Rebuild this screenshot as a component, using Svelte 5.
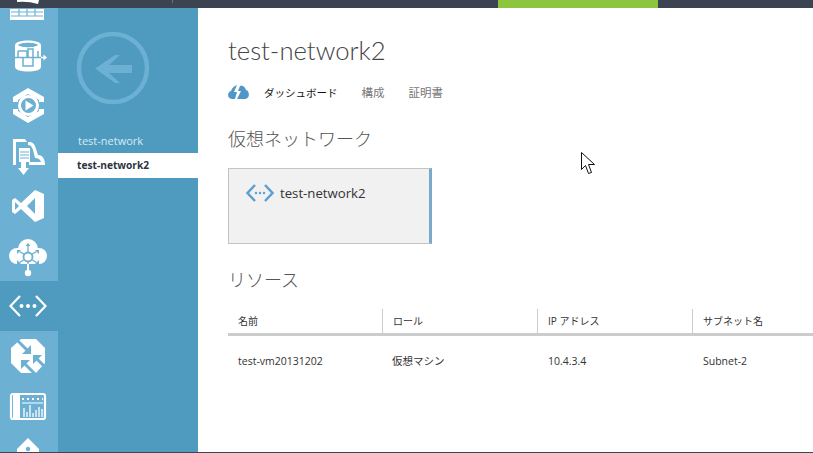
<script lang="ts">
	const columns = ['名前', 'ロール', 'IP アドレス', 'サブネット名'];
	const row = ['test-vm20131202', '仮想マシン', '10.4.3.4', 'Subnet-2'];
	const tabs = ['構成', '証明書'];
</script>

<div class="portal">
	<div class="topbar">
		<svg class="logo" width="24" height="4" viewBox="0 0 24 4"><path d="M0 0h22l-1 4q-10-3-21-2z" fill="#fff" /></svg>
		<span class="tick"></span>
		<span class="progress"></span>
	</div>

	<div class="body">
		<nav class="rail">
			<!-- grid -->
			<a class="item" href="#sql">
				<svg width="58" height="50" viewBox="0 0 58 50">
					<path d="M10 28h34v11H10z" fill="#fff" />
					<path d="M19 27v8M27 27v8M35 27v8M11 31h32M11 35h32" stroke="#6cb0d3" stroke-width="1.200" fill="none" />
				</svg>
			</a>
			<!-- db sync -->
			<a class="item" href="#db">
				<svg width="58" height="50" viewBox="0 0 58 50">
					<path d="M15 14c0-6 26-6 26 0v22c0 6-26 6-26 0z" fill="#fff" />
					<path d="M18 14c3-3 17-3 20 0c-3 3-17 3-20 0z" fill="#6cb0d3" />
					<path d="M18 20h9v6M18 20v7M23 27v8h10v-8M33 27v-9h-5v9M38 20v7" fill="none" stroke="#6cb0d3" stroke-width="1.500" />
					<path d="M15 26.500h26" stroke="#6cb0d3" stroke-width="1.500" />
					<path d="M41 26.500h4" stroke="#fff" stroke-width="1.600" />
					<path d="M43.500 23.500l3.500 3-3.500 3z" fill="#fff" />
				</svg>
			</a>
			<!-- media -->
			<a class="item" href="#media">
				<svg width="58" height="50" viewBox="0 0 58 50">
					<path d="M13 21v-5l15-9 16 9v5h-5v-2l-11-6-10 6v2zM13 28v5l15 9 16-9v-5h-5v2l-11 6-10-6v-2z" fill="#fff" />
					<circle cx="28.500" cy="24.500" r="9" fill="none" stroke="#fff" stroke-width="3" />
					<path d="M25.500 19.500l8 5-8 5z" fill="#fff" />
				</svg>
			</a>
			<!-- service bus download -->
			<a class="item" href="#bus">
				<svg width="58" height="50" viewBox="0 0 58 50">
					<path d="M13 8h12l2 3h3c3 0 5 3 6 7l2 6c4 0 7 3 7 10H29v-3h12c-1-3-3-4-6-4l-2-8c-1-3-2-5-5-5v-3h-12v23h-3z" fill="#fff" />
					<path d="M19 17h11v14h-11z" fill="#fff" />
					<path d="M20 21h9M20 24h9M20 27h9" stroke="#6cb0d3" stroke-width="1.200" />
					<path d="M21 31h5v6h3l-5.500 7-5.500-7h3z" fill="#fff" />
				</svg>
			</a>
			<!-- visual studio -->
			<a class="item" href="#vs">
				<svg width="58" height="50" viewBox="0 0 58 50">
					<path d="M35 9l9 4v24l-9 4-14-13-6 5-3-2V19l3-2 6 5zM35 17l-8 8 8 8zM15 21v8l4-4z" fill="#fff" fill-rule="evenodd" />
				</svg>
			</a>
			<!-- cloud network -->
			<a class="item" href="#traffic">
				<svg width="58" height="50" viewBox="0 0 58 50">
					<circle cx="17" cy="25" r="8" fill="#fff" />
					<circle cx="28" cy="18" r="10" fill="#fff" />
					<circle cx="39" cy="25" r="8" fill="#fff" />
					<path d="M17 22h22v11H17z" fill="#fff" />
					<path d="M28 33v8" stroke="#fff" stroke-width="2" />
					<circle cx="28" cy="42" r="3.200" fill="#fff" />
					<circle cx="28" cy="26" r="4.500" fill="none" stroke="#6cb0d3" stroke-width="1.800" />
					<path d="M28 21v-7M24.500 23.500l-5-3M31.500 23.500l5-3M24.500 28.500l-5 3M31.500 28.500l5 3M28 31v2" stroke="#6cb0d3" stroke-width="1.300" />
					<path d="M25.500 15l2.500-3 2.500 3zM17 23v-4h4zM39 23v-4h-4zM17 29v4h4zM39 29v4h-4z" fill="#6cb0d3" />
				</svg>
			</a>
			<!-- virtual network, current section -->
			<a class="item active" href="#network">
				<svg width="58" height="50" viewBox="0 0 58 50">
					<path d="M20 15l-9.500 10 9.500 10M36 15l9.500 10-9.500 10" fill="none" stroke="#fff" stroke-width="2.200" />
					<circle cx="21.500" cy="25" r="2" fill="#fff" />
					<circle cx="28" cy="25" r="2" fill="#fff" />
					<circle cx="34.500" cy="25" r="2" fill="#fff" />
				</svg>
			</a>
			<!-- expressroute arrows -->
			<a class="item" href="#routes">
				<svg width="58" height="50" viewBox="0 0 58 50">
					<path d="M21 8h15l9 9v15l-9 10H21l-10-10V17z" fill="#fff" />
					<path d="M17 9l11 11M36 27l10 10M24 32l11 11" stroke="#6cb0d3" stroke-width="3" />
					<path d="M31 23v-9l-9 9zM33 24h9l-9 9zM21 29h9l-9 9z" fill="#6cb0d3" />
				</svg>
			</a>
			<!-- dashboard chart -->
			<a class="item" href="#monitor">
				<svg width="58" height="50" viewBox="0 0 58 50">
					<rect x="11" y="13" width="34" height="25" rx="2" fill="none" stroke="#fff" stroke-width="2.200" />
					<path d="M13 14h7v23h-7z" fill="#fff" />
					<path d="M22 18h21" stroke="#fff" stroke-width="2" stroke-dasharray="2 3" />
					<path d="M22 22h21" stroke="#fff" stroke-width="1" />
					<path d="M24 36v-9M27 36v-5M30 36v-12M33 36v-4M36 36v-7M39 36v-10M42 36v-8" stroke="#fff" stroke-width="1.300" />
				</svg>
			</a>
			<!-- storage, cut off by the window -->
			<a class="item" href="#storage">
				<svg width="58" height="50" viewBox="0 0 58 50">
					<path d="M28 7l11 11v6H17v-6z" fill="#fff" />
					<circle cx="28" cy="18" r="2.200" fill="#6cb0d3" />
				</svg>
			</a>
		</nav>

		<aside class="subnav">
			<svg class="back" width="78" height="78" viewBox="0 0 78 78">
				<circle cx="38" cy="38" r="34" fill="none" stroke="#6cb0d3" stroke-width="4.500" />
				<path d="M20 38.500L40 25h5L34 35h23v8H34l11 10h-5z" fill="#6cb0d3" />
			</svg>
			<a class="sub" href="#test-network">test-network</a>
			<a class="sub selected" href="#test-network2">test-network2</a>
		</aside>

		<main>
			<h1>test-network2</h1>
			<div class="tabs">
				<svg width="21" height="16" viewBox="0 0 21 16">
					<path d="M4 15c-5 0-5-7-1-8 1-3 3-5 6-6L6 8h3l-2 7zM9 15l4-8h-3l2-5c3-1 5 1 6 4 4 1 4 9-1 9z" fill="#4f97c6" />
				</svg>
				<span class="tab current">ダッシュボード</span>
				{#each tabs as tab}
					<span class="tab">{tab}</span>
				{/each}
			</div>

			<h2 class="vnet">仮想ネットワーク</h2>
			<div class="tile">
				<svg width="28" height="20" viewBox="0 0 28 20">
					<path d="M9 2L1.500 10 9 18M19 2l7.500 8L19 18" fill="none" stroke="#5c9fd0" stroke-width="2.500" />
					<circle cx="10" cy="10" r="1.200" fill="#5c9fd0" />
					<circle cx="14" cy="10" r="1.200" fill="#5c9fd0" />
					<circle cx="18" cy="10" r="1.200" fill="#5c9fd0" />
				</svg>
				<span>test-network2</span>
			</div>

			<h2 class="res">リソース</h2>
			<div class="table">
				{#each columns as col}
					<div class="th">{col}</div>
				{/each}
				{#each row as cell}
					<div class="td">{cell}</div>
				{/each}
			</div>
		</main>
	</div>

	<svg class="cursor" width="14" height="23" viewBox="0 0 14 23">
		<path d="M.500.500v17l4-4 3 8 3-1-3-8h6z" fill="#fff" stroke="#111" stroke-width="1" />
	</svg>
</div>

<style>
	:global(body) {
		margin: 0;
		font-family: 'Open Sans', 'Noto Sans CJK JP', sans-serif;
		background: #fff;
	}

	.portal {
		position: relative;
		width: 813px;
		height: 453px;
		overflow: hidden;
		display: flex;
		flex-direction: column;
		box-sizing: border-box;
		border-bottom: 1px solid #3e4650;
	}

	.topbar {
		position: relative;
		flex: none;
		height: 8px;
		background: #3b4450;
		display: flex;
	}

	.logo {
		position: absolute;
		left: 17px;
		top: 0;
	}

	.tick {
		position: absolute;
		left: 172px;
		top: 0;
		width: 1px;
		height: 3px;
		background: #6b737e;
	}

	.progress {
		margin-left: 498px;
		width: 160px;
		background: #8cc63f;
	}

	.body {
		flex: 1;
		display: flex;
		min-height: 0;
	}

	.rail {
		flex: none;
		width: 58px;
		background: #6cb0d3;
		overflow: hidden;
	}

	.item {
		display: block;
		height: 50px;
	}

	.item:first-child {
		margin-top: -27px;
	}

	.item svg {
		display: block;
	}

	.item.active {
		background: #4f9abf;
	}

	.subnav {
		flex: none;
		width: 140px;
		background: #4f9abf;
		display: flex;
		flex-direction: column;
	}

	.back {
		margin: 22px 0 0 17px;
		display: block;
	}

	.sub {
		display: block;
		height: 25px;
		line-height: 25px;
		padding-left: 20px;
		font-size: 11px;
		color: #d8eaf3;
		text-decoration: none;
	}

	.subnav .back + .sub {
		margin-top: 20px;
	}

	.sub.selected {
		background: #fff;
		color: #2a3540;
		font-size: 10.200px;
		font-weight: 700;
		padding-left: 19px;
	}

	main {
		flex: 1;
		min-width: 0;
		padding-left: 30px;
		overflow: hidden;
		color: #444;
	}

	h1 {
		margin: 24px 0 0;
		font-family: 'Lato', 'Open Sans', sans-serif;
		font-size: 25.700px;
		line-height: 36px;
		font-weight: 300;
		color: #444;
	}

	.tabs {
		margin-top: 14px;
		height: 20px;
		display: flex;
		align-items: center;
		font-size: 11.500px;
		color: #777;
	}

	.tabs svg {
		margin-right: 15px;
	}

	.tab {
		margin-right: 24px;
	}

	.tab.current {
		color: #111;
		font-size: 10.500px;
	}

	h2 {
		margin: 0;
		font-size: 18px;
		line-height: 26px;
		font-weight: 300;
		color: #555;
	}

	.vnet {
		margin-top: 24px;
	}

	.tile {
		margin-top: 16px;
		box-sizing: border-box;
		width: 204px;
		height: 76px;
		background: #f1f1f1;
		border: 1px solid #c4c4c4;
		border-right: 3px solid #7aa9cb;
		padding: 14px 0 0 17px;
		display: flex;
		align-items: flex-start;
		gap: 6px;
		font-size: 13.200px;
		line-height: 20px;
		color: #333;
	}

	.res {
		margin-top: 23px;
	}

	.table {
		margin-top: 16px;
		display: grid;
		grid-template-columns: 154px 155px 155px 155px;
		font-size: 10.500px;
		color: #333;
	}

	.th {
		height: 24px;
		line-height: 24px;
		padding-left: 10px;
		border-bottom: 3px solid #ccc;
		border-left: 1px solid #ccc;
		white-space: nowrap;
		font-size: 10px;
	}

	.th:first-child {
		border-left: 0;
	}

	.td {
		padding: 16px 0 0 11px;
		line-height: 18px;
		white-space: nowrap;
	}

	.td:nth-child(5),
	.td:nth-child(6) {
		padding-left: 10px;
	}

	.cursor {
		position: absolute;
		left: 581px;
		top: 152px;
	}
</style>
